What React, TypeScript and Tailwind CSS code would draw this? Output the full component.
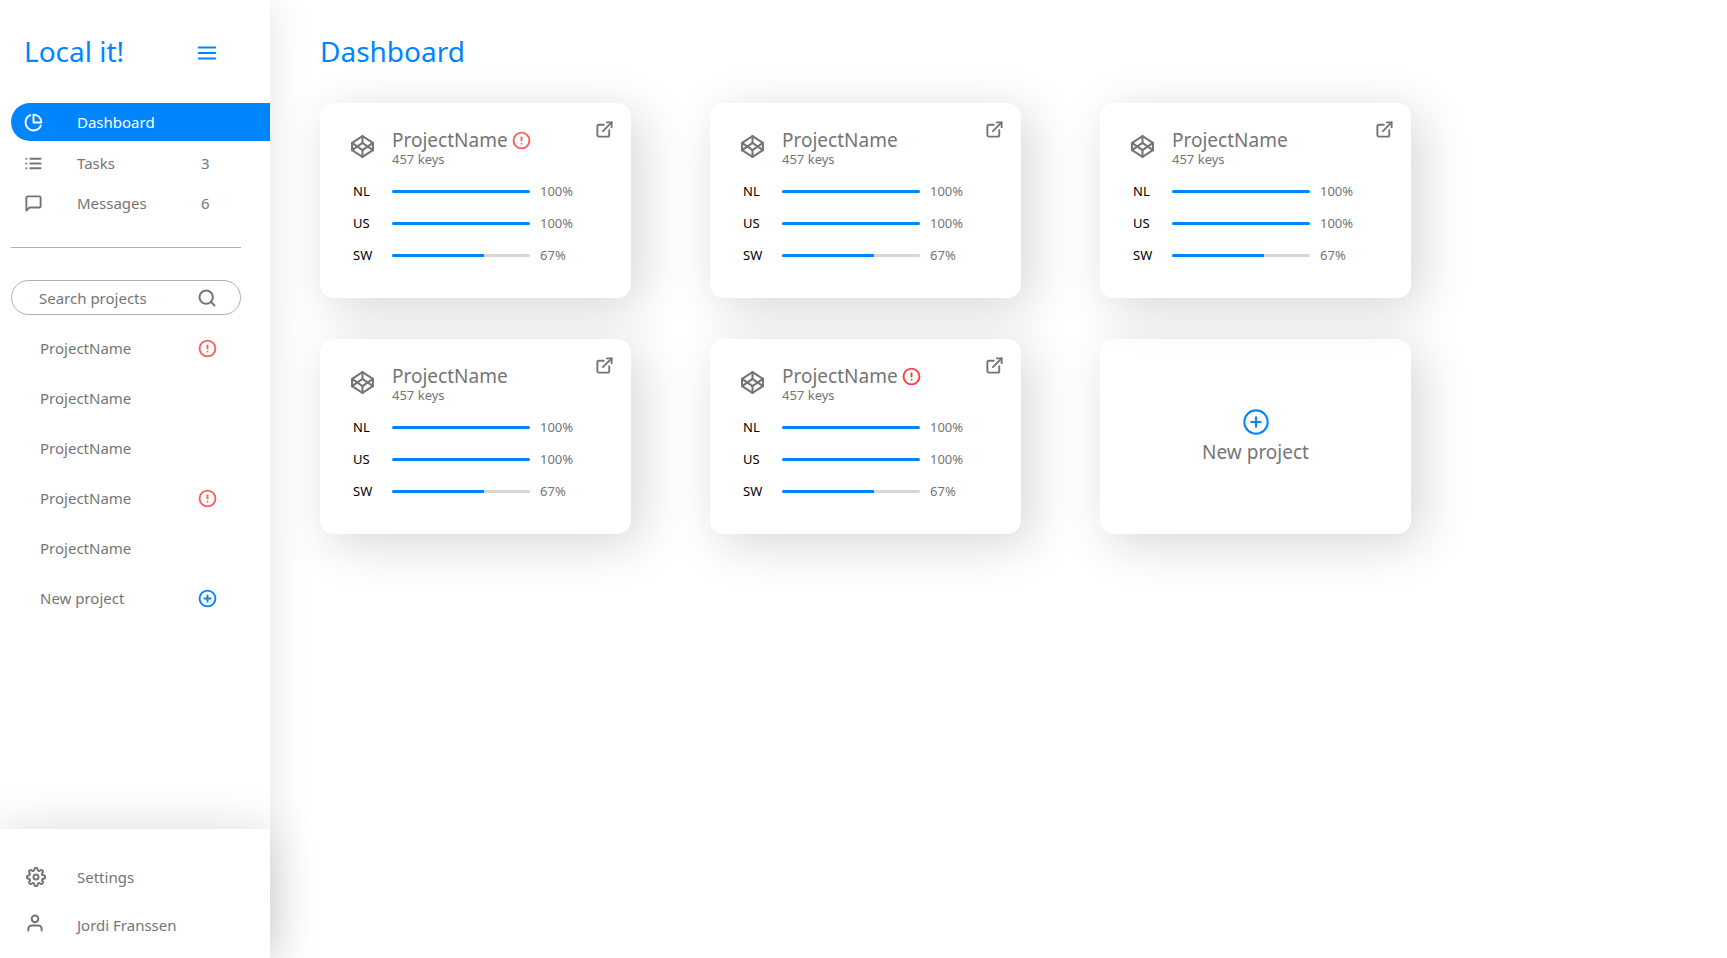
import type { ReactNode } from "react";
import {
  FiAlertCircle,
  FiCodepen,
  FiExternalLink,
  FiList,
  FiMenu,
  FiMessageSquare,
  FiPieChart,
  FiPlusCircle,
  FiSearch,
  FiSettings,
  FiUser,
} from "react-icons/fi";

const languages = [
  { code: "NL", percent: 100 },
  { code: "US", percent: 100 },
  { code: "SW", percent: 67 },
];

const sidebarProjects = [true, false, false, true, false];
const cards = ["text-[#ff5c5c]", null, null, null, "text-[#ff3b3b]"];

function NavLink({ icon, label, count }: { icon: ReactNode; label: string; count?: number }) {
  return (
    <a href="#" className="flex h-10 items-center pl-6 text-[#757575]">
      <span className="w-[53px]">{icon}</span>
      <span className="w-[124px]">{label}</span>
      <span>{count}</span>
    </a>
  );
}

function Sidebar() {
  return (
    <aside className="relative z-10 flex min-h-screen w-[270px] shrink-0 flex-col bg-white text-[15px] leading-5 text-[#757575] shadow-[4px_0_40px_rgba(0,0,0,0.09)]">
      <div className="flex h-[103px] items-center justify-between pr-[52px] pb-0.5 pl-6 text-[#0085ff]">
        <span className="text-[28px] leading-8">Local it!</span>
        <button aria-label="Toggle menu" className="mt-1">
          <FiMenu size={22} strokeWidth={2.2} />
        </button>
      </div>

      <nav>
        <a href="#" className="ml-[11px] flex h-[38px] items-center rounded-l-full bg-[#0085ff] pl-[13px] text-white">
          <span className="w-[53px]">
            <FiPieChart size={19} strokeWidth={2.4} />
          </span>
          Dashboard
        </a>
        <div className="pt-0.5">
          <NavLink icon={<FiList size={19} strokeWidth={2.4} />} label="Tasks" count={3} />
          <NavLink icon={<FiMessageSquare size={19} strokeWidth={2.4} />} label="Messages" count={6} />
        </div>
      </nav>

      <hr className="mt-6 mr-[29px] ml-[11px] border-[#b0b0b0]" />

      <label className="mt-8 mr-[29px] ml-[11px] flex h-[35px] items-center rounded-full border border-[#b0b0b0] pr-[23px] pl-[27px]">
        <input
          aria-label="Search projects"
          placeholder="Search projects"
          className="w-full min-w-0 bg-transparent outline-none placeholder:text-[#757575]"
        />
        <FiSearch size={20} strokeWidth={2.4} className="shrink-0" />
      </label>

      <ul className="mt-2 pr-[53px] pb-20 pl-10">
        {sidebarProjects.map((alert, i) => (
          <li key={i}>
            <a href="#" className="flex h-[50px] items-center justify-between">
              ProjectName
              {alert && <FiAlertCircle size={19} strokeWidth={2.4} className="text-[#ff5c5c]" />}
            </a>
          </li>
        ))}
        <li>
          <button className="flex h-[50px] w-full items-center justify-between">
            New project
            <FiPlusCircle size={19} strokeWidth={2.4} className="text-[#0085ff]" />
          </button>
        </li>
      </ul>

      <div className="mt-auto bg-white pt-6 pb-[9px] shadow-[0_4px_50px_rgba(0,0,0,0.17)]">
        <a href="#" className="flex h-12 items-center pl-[26px]">
          <FiSettings size={20} strokeWidth={2.4} className="mr-[31px]" />
          Settings
        </a>
        <a href="#" className="flex h-12 items-center pl-[25px]">
          <FiUser size={20} strokeWidth={2.4} className="mr-8 mb-1" />
          Jordi Franssen
        </a>
      </div>
    </aside>
  );
}

const cardClass =
  "h-[195px] w-[311px] rounded-[14px] bg-white shadow-[10px_10px_50px_rgba(0,0,0,0.16)]";

function ProjectCard({ alertColor }: { alertColor: string | null }) {
  return (
    <article className={`${cardClass} relative pt-[27px] pl-[30px] text-[#757575]`}>
      <button aria-label="Open project" className="absolute top-[17px] right-[17px]">
        <FiExternalLink size={19} strokeWidth={2.4} />
      </button>
      <div className="flex">
        <FiCodepen size={25} strokeWidth={2} className="mt-1 mr-[17px]" />
        <div>
          <div className="flex h-[21px] items-center gap-1">
            <h2 className="text-[19px] leading-[21px]">ProjectName</h2>
            {alertColor && <FiAlertCircle size={19} strokeWidth={2.4} className={alertColor} />}
          </div>
          <p className="text-[13px] leading-4">457 keys</p>
        </div>
      </div>
      <ul className="mt-2 text-[13px] leading-4">
        {languages.map(({ code, percent }) => (
          <li key={code} className="flex h-8 items-center">
            <span className="w-[42px] pl-[3px] text-black">{code}</span>
            <span className="h-[3px] w-[138px] overflow-hidden rounded-full bg-[#d6d6d6]">
              <span className="block h-full bg-[#0085ff]" style={{ width: `${percent}%` }} />
            </span>
            <span className="pl-2.5">{percent}%</span>
          </li>
        ))}
      </ul>
    </article>
  );
}

export default function App() {
  return (
    <div className="flex min-h-screen bg-white font-['Noto_Sans',sans-serif]">
      <Sidebar />
      <main className="flex-1 pr-10 pb-16 pl-[50px]">
        <h1 className="flex h-[103px] items-center pb-0.5 text-[28px] leading-8 text-[#0085ff]">Dashboard</h1>
        <div className="flex max-w-[1100px] flex-wrap gap-x-[79px] gap-y-[41px]">
          {cards.map((alertColor, i) => (
            <ProjectCard key={i} alertColor={alertColor} />
          ))}
          <button className={`${cardClass} flex flex-col items-center justify-center gap-0.5 text-[19px] leading-7 text-[#757575]`}>
            <FiPlusCircle size={28} strokeWidth={1.8} className="text-[#0085ff]" />
            New project
          </button>
        </div>
      </main>
    </div>
  );
}
